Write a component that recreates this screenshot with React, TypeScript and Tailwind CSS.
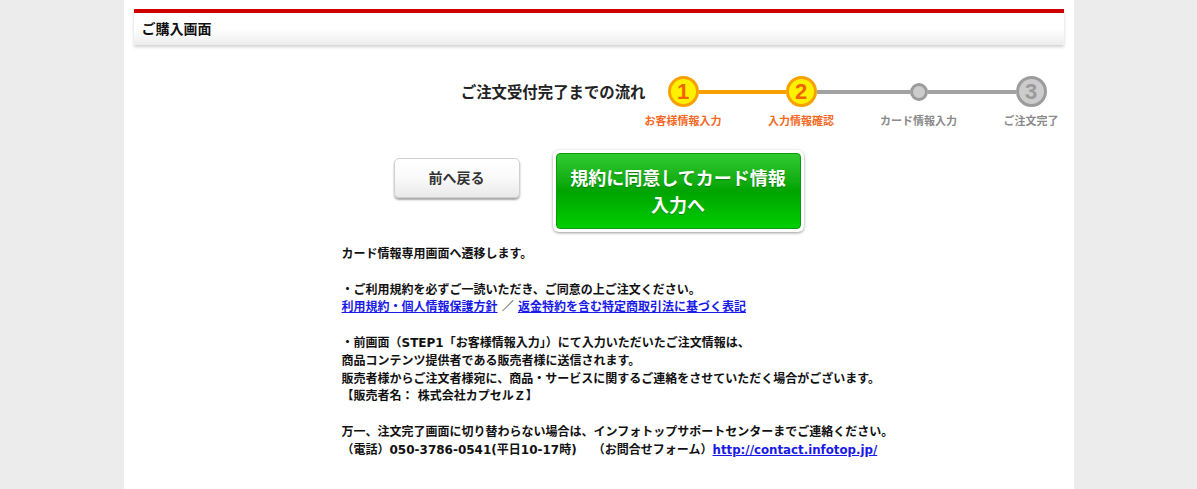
import React from "react";

const FONT = { fontFamily: '"Liberation Sans", "Noto Sans CJK JP", sans-serif' };
const BODY_FONT = { fontFamily: '"DejaVu Sans", "Noto Sans CJK JP", sans-serif' };

function BigCircle({ n, active }: { n: string; active: boolean }) {
  return (
    <div
      className={
        active
          ? "w-[31px] h-[31px] rounded-full border-[3px] border-[#f7a100] bg-[#fff000] flex items-center justify-center text-[22px] font-bold text-[#f06400] leading-none"
          : "w-[31px] h-[31px] rounded-full border-[3px] border-[#9c9c9c] bg-[#cccccc] flex items-center justify-center text-[22px] font-bold text-[#9a9a9a] leading-none"
      }
    >
      <span className="mt-[1px]">{n}</span>
    </div>
  );
}

export default function App() {
  return (
    <div className="min-h-[489px] bg-[#ececec] text-[#111]" style={FONT}>
      <div className="mx-auto w-[950px] min-h-[489px] bg-white px-[10px] pt-[9px]">
        {/* header */}
        <div className="border-t-4 border-[#d00000] h-[36px] bg-gradient-to-b from-white via-white to-[#ededed] shadow-[0_2px_3px_rgba(0,0,0,0.18)] flex items-center pl-[8px]">
          <span className="text-[14px] font-bold text-[#111]">ご購入画面</span>
        </div>

        {/* steps */}
        <div className="mt-[31px] flex justify-end pr-[17px]">
          <div className="mr-[22px] text-[15.4px] font-bold leading-[33px] text-[#222]">
            ご注文受付完了までの流れ
          </div>
          <div className="flex items-start">
            <div className="flex w-[31px] flex-col items-center">
              <BigCircle n="1" active />
              <span className="mt-[8px] whitespace-nowrap text-[11px] font-bold leading-[13px] text-[#f3691f]">
                お客様情報入力
              </span>
            </div>
            <div className="mt-[13.5px] h-[4px] w-[87px] bg-[#f7a100]" />
            <div className="flex w-[31px] flex-col items-center">
              <BigCircle n="2" active />
              <span className="mt-[8px] whitespace-nowrap text-[11px] font-bold leading-[13px] text-[#f3691f]">
                入力情報確認
              </span>
            </div>
            <div className="mt-[13.5px] h-[4px] w-[93px] bg-[#a2a2a2]" />
            <div className="flex w-[18px] flex-col items-center">
              <div className="mt-[6.5px] h-[18px] w-[18px] rounded-full border-[3px] border-[#9c9c9c] bg-[#cccccc]" />
              <span className="mt-[14.5px] whitespace-nowrap text-[11px] font-bold leading-[13px] text-[#8a8a8a]">
                カード情報入力
              </span>
            </div>
            <div className="mt-[13.5px] h-[4px] w-[88px] bg-[#a2a2a2]" />
            <div className="flex w-[31px] flex-col items-center">
              <BigCircle n="3" active={false} />
              <span className="mt-[8px] whitespace-nowrap text-[11px] font-bold leading-[13px] text-[#8a8a8a]">
                ご注文完了
              </span>
            </div>
          </div>
        </div>

        {/* buttons */}
        <div className="mt-[22px] flex items-start justify-center gap-[33px]">
          <button className="mt-[8px] h-[40px] w-[126px] rounded-[5px] border border-[#cfcfcf] bg-gradient-to-b from-white via-[#fafafa] to-[#e9e9e9] text-[14px] font-bold text-[#333] shadow-[0_2px_2px_rgba(0,0,0,0.35)]">
            前へ戻る
          </button>
          <div className="rounded-[6px] bg-white p-[3px] shadow-[0_1px_3px_rgba(0,0,0,0.4)]">
            <button className="flex h-[76px] w-[245px] flex-col items-center justify-center rounded-[4px] border border-[#0a9a0a] bg-gradient-to-b from-[#2fcb2f] via-[#00a300] to-[#00cf00] pt-[3px] text-[18px] font-bold leading-[27px] text-white [text-shadow:0_1px_1px_rgba(0,80,0,0.5)]">
              <span>規約に同意してカード情報</span>
              <span>入力へ</span>
            </button>
          </div>
        </div>

        {/* text */}
        <div
          className="mt-[14px] pl-[208px] text-[12px] font-bold leading-[17.8px] whitespace-nowrap text-[#111]"
          style={BODY_FONT}
        >
          <p>カード情報専用画面へ遷移します。</p>
          <p>&nbsp;</p>
          <p>・ご利用規約を必ずご一読いただき、ご同意の上ご注文ください。</p>
          <p>
            <a href="#" className="text-[#1a1ae6] underline">利用規約・個人情報保護方針</a>
            <span> ／ </span>
            <a href="#" className="text-[#1a1ae6] underline">返金特約を含む特定商取引法に基づく表記</a>
          </p>
          <p>&nbsp;</p>
          <p>・前画面（STEP1「お客様情報入力」）にて入力いただいたご注文情報は、</p>
          <p>商品コンテンツ提供者である販売者様に送信されます。</p>
          <p>販売者様からご注文者様宛に、商品・サービスに関するご連絡をさせていただく場合がございます。</p>
          <p>【販売者名： 株式会社カプセルＺ】</p>
          <p>&nbsp;</p>
          <p>万一、注文完了画面に切り替わらない場合は、インフォトップサポートセンターまでご連絡ください。</p>
          <p>
            （電話）050-3786-0541(平日10-17時)　 （お問合せフォーム）
            <a href="#" className="text-[11.8px] text-[#1a1ae6] underline">http://contact.infotop.jp/</a>
          </p>
        </div>
      </div>
    </div>
  );
}
